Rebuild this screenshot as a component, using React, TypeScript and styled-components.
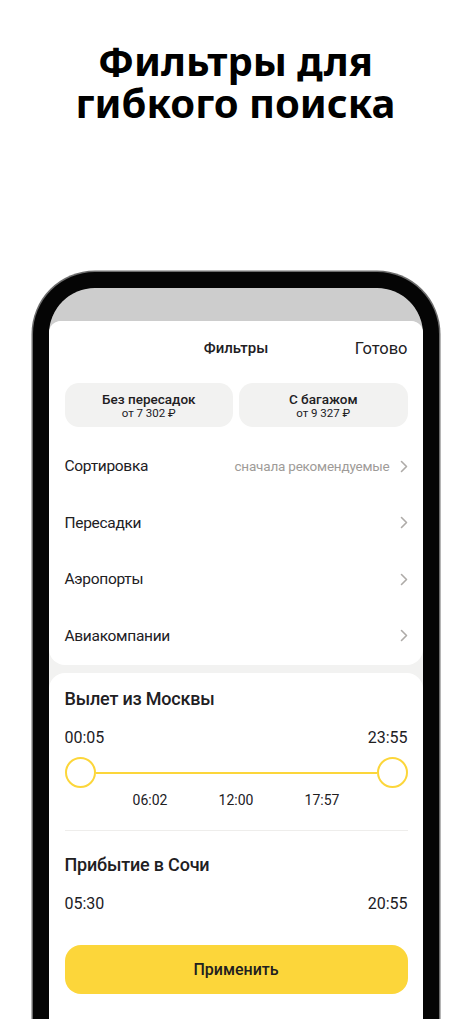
import styled, { createGlobalStyle } from 'styled-components';

const GlobalStyle = createGlobalStyle`
  html, body {
    margin: 0;
    padding: 0;
    background: #ffffff;
  }
  body {
    font-family: Roboto, "Noto Sans", sans-serif;
    color: #21201f;
  }
`;

const yellow = '#fcd63a';

const Chevron = () => (
  <svg width="8" height="13" viewBox="0 0 8 13" fill="none">
    <path d="M1.5 1.5L6.5 6.5L1.5 11.5" stroke="#aeaba8" strokeWidth="1.6" strokeLinecap="round" strokeLinejoin="round" />
  </svg>
);

const rows = [
  { title: 'Сортировка', value: 'сначала рекомендуемые' },
  { title: 'Пересадки', value: '' },
  { title: 'Аэропорты', value: '' },
  { title: 'Авиакомпании', value: '' },
];

const chips = [
  { title: 'Без пересадок', price: 'от 7 302 ₽' },
  { title: 'С багажом', price: 'от 9 327 ₽' },
];

const App = () => {
  return (
    <Page>
      <GlobalStyle />
      <Headline>
        <HeadLine>Фильтры для</HeadLine>
        <HeadLine>гибкого поиска</HeadLine>
      </Headline>
      <Phone>
        <Screen>
          <Backdrop />
          <Sheet>
            <Card>
              <Header>
                <HeaderTitle>Фильтры</HeaderTitle>
                <Done>Готово</Done>
              </Header>
              <Chips>
                {chips.map((c) => (
                  <Chip key={c.title}>
                    <ChipTitle>{c.title}</ChipTitle>
                    <ChipPrice>{c.price}</ChipPrice>
                  </Chip>
                ))}
              </Chips>
              <List>
                {rows.map((r) => (
                  <Row key={r.title}>
                    <RowTitle>{r.title}</RowTitle>
                    <RowRight>
                      {r.value && <RowValue>{r.value}</RowValue>}
                      <Chevron />
                    </RowRight>
                  </Row>
                ))}
              </List>
            </Card>
            <TimeCard>
              <SectionTitle>Вылет из Москвы</SectionTitle>
              <Times>
                <span>00:05</span>
                <span>23:55</span>
              </Times>
              <Slider>
                <Thumb />
                <Track />
                <Thumb />
              </Slider>
              <Ticks>
                <span>06:02</span>
                <span>12:00</span>
                <span>17:57</span>
              </Ticks>
              <Divider />
              <SectionTitle>Прибытие в Сочи</SectionTitle>
              <Times>
                <span>05:30</span>
                <span>20:55</span>
              </Times>
              <ApplyButton>Применить</ApplyButton>
            </TimeCard>
          </Sheet>
        </Screen>
      </Phone>
    </Page>
  );
};

export default App;

const Page = styled.div`
  height: 1019px;
  overflow: hidden;
  display: flex;
  flex-direction: column;
  align-items: center;
`;

const Headline = styled.h1`
  margin: 40px 0 0;
  font-family: "Noto Sans", sans-serif;
  font-weight: 700;
  font-size: 40px;
  text-align: center;
  color: #000;
`;

const HeadLine = styled.div`
  height: 42px;
  line-height: 42px;
  white-space: nowrap;
`;

const Phone = styled.div`
  margin-top: 148px;
  width: 406px;
  height: 820px;
  flex-shrink: 0;
  box-sizing: border-box;
  border: 16px solid #050505;
  border-bottom: none;
  border-radius: 62px 62px 0 0;
  box-shadow: 0 0 0 1.5px #6d6d6d, inset 0 0 0 1px #3a3a3a;
  background: #050505;
`;

const Screen = styled.div`
  height: 100%;
  border-radius: 46px 46px 0 0;
  overflow: hidden;
  background: #cdcdcd;
  display: flex;
  flex-direction: column;
`;

const Backdrop = styled.div`
  height: 33px;
  flex-shrink: 0;
`;

const Sheet = styled.div`
  flex: 1;
  background: #f2f2f1;
  border-radius: 12px 12px 0 0;
  display: flex;
  flex-direction: column;
  gap: 8px;
  overflow: hidden;
`;

const Card = styled.div`
  background: #fff;
  border-radius: 0 0 16px 16px;
  padding: 0 15px 1px 16px;
`;

const Header = styled.div`
  height: 54px;
  display: flex;
  align-items: center;
  justify-content: center;
  position: relative;
`;

const HeaderTitle = styled.div`
  font-size: 15px;
  font-weight: 500;
`;

const Done = styled.div`
  position: absolute;
  right: 0;
  top: 50%;
  transform: translateY(-50%);
  font-size: 16.5px;
`;

const Chips = styled.div`
  margin-top: 8px;
  display: grid;
  grid-template-columns: 1fr 1fr;
  gap: 6px;
`;

const Chip = styled.div`
  height: 44px;
  border-radius: 14px;
  background: #f2f2f1;
  display: flex;
  flex-direction: column;
  align-items: center;
  justify-content: center;
`;

const ChipTitle = styled.div`
  font-size: 13.5px;
  font-weight: 500;
  line-height: 16px;
`;

const ChipPrice = styled.div`
  font-size: 11.5px;
  line-height: 13px;
`;

const List = styled.div`
  margin-top: 11px;
`;

const Row = styled.div`
  height: 56.5px;
  display: flex;
  align-items: center;
  justify-content: space-between;
`;

const RowTitle = styled.div`
  font-size: 15.5px;
  letter-spacing: -0.3px;
`;

const RowRight = styled.div`
  display: flex;
  align-items: center;
  gap: 10px;
`;

const RowValue = styled.div`
  font-size: 13.5px;
  letter-spacing: -0.2px;
  color: #9e9b98;
`;

const TimeCard = styled.div`
  flex: 1;
  background: #fff;
  border-radius: 16px 16px 0 0;
  padding: 14px 15px 0 16px;
  display: flex;
  flex-direction: column;
`;

const SectionTitle = styled.div`
  font-size: 18px;
  font-weight: 500;
  line-height: 24px;
  letter-spacing: -0.2px;
`;

const Times = styled.div`
  margin-top: 17px;
  display: flex;
  justify-content: space-between;
  font-size: 16px;
  line-height: 20px;
`;

const Slider = styled.div`
  margin-top: 9px;
  display: flex;
  align-items: center;
`;

const Thumb = styled.div`
  width: 31px;
  height: 31px;
  box-sizing: border-box;
  flex-shrink: 0;
  border-radius: 50%;
  border: 2px solid ${yellow};
  background: #fff;
`;

const Track = styled.div`
  flex: 1;
  height: 2px;
  background: ${yellow};
`;

const Ticks = styled.div`
  margin-top: 3px;
  display: grid;
  grid-template-columns: repeat(3, 86px);
  justify-content: center;
  justify-items: center;
  font-size: 14px;
  line-height: 18px;
`;

const Divider = styled.div`
  margin: 21px 0 22px;
  height: 1px;
  background: #eeedeb;
`;

const ApplyButton = styled.button`
  margin-top: 31px;
  height: 49px;
  border: none;
  border-radius: 16px;
  background: ${yellow};
  font-family: Roboto, "Noto Sans", sans-serif;
  font-size: 16px;
  font-weight: 500;
  color: #21201f;
`;
